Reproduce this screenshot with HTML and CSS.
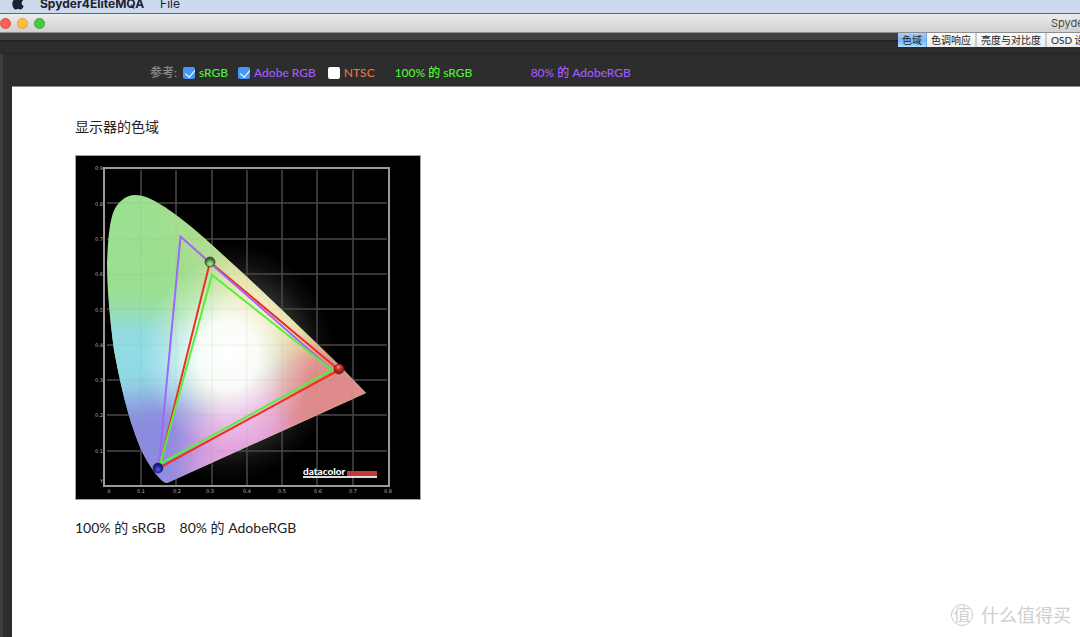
FILE: index.html
```html
<!DOCTYPE html>
<html lang="zh-CN">
<head>
<meta charset="utf-8">
<title>Spyder4EliteMQA</title>
<link rel="stylesheet" href="styles.css">
</head>
<body>
<header class="menubar">
  <svg class="apple" viewBox="0 0 12 14" aria-hidden="true"><path d="M8.4 0.2C8.5 1.6 7.4 2.9 6 3 5.9 1.6 7.1 0.4 8.4 0.2ZM6.1 3.9C6.8 3.9 7.4 3.2 8.6 3.2 9.7 3.2 10.7 3.8 11.2 4.6 8.9 6 9.3 9.2 11.7 10 11 12 9.8 13.6 8.6 13.6 7.6 13.6 7.2 13 6.1 13 5 13 4.6 13.6 3.7 13.6 2.1 13.6 0.3 10.7 0.3 7.7 0.3 4.8 2.1 3.2 3.8 3.2 4.9 3.2 5.5 3.9 6.1 3.9Z"/></svg>
  <span class="app-name">Spyder4EliteMQA</span>
  <span class="menu-item">File</span>
</header>
<div class="titlebar">
  <div class="lights">
    <button class="light close" aria-label="关闭"></button>
    <button class="light minimise" aria-label="最小化"></button>
    <button class="light expand" aria-label="缩放"></button>
  </div>
  <span class="window-title">Spyder</span>
</div>
<main class="window">
  <div class="top-strip">
    <nav class="tabs">
      <button class="tab active">色域</button>
      <button class="tab">色调响应</button>
      <button class="tab">亮度与对比度</button>
      <button class="tab">OSD 设置</button>
    </nav>
  </div>
  <section class="body">
    <div class="reference">
      <span class="ref-label">参考:</span>
      <label class="option green"><input type="checkbox" checked>sRGB</label>
      <label class="option purple"><input type="checkbox" checked>Adobe RGB</label>
      <label class="option orange"><input type="checkbox">NTSC</label>
      <span class="result green">100% 的 sRGB</span>
      <span class="result purple">80% 的 AdobeRGB</span>
    </div>
    <article class="sheet">
      <h1 class="heading">显示器的色域</h1>
      <svg class="chart" viewBox="0 0 346 345" role="img" aria-label="色域图">
        <defs>
          <clipPath id="locus"><path d="M92 328C86 328 73 310 65 292C52 260 45 227 39 195C35 165 32 135 32 108C33 80 35 67 38 58C42 47 51 40 60 40C69 40 76 44 83 48C102 59 119 74 137 90L172 122L207 155L262 208L291 238Z"/></clipPath>
          <filter id="soft" x="-60%" y="-60%" width="220%" height="220%"><feGaussianBlur stdDeviation="15"/></filter>
          <radialGradient id="glow"><stop offset="0" stop-color="#fff" stop-opacity=".8"/><stop offset=".65" stop-color="#fff" stop-opacity=".34"/><stop offset=".85" stop-color="#fff" stop-opacity=".1"/><stop offset="1" stop-color="#fff" stop-opacity="0"/></radialGradient>
          <radialGradient id="white"><stop offset="0" stop-color="#fff"/><stop offset=".35" stop-color="#fff" stop-opacity=".92"/><stop offset=".7" stop-color="#fff" stop-opacity=".3"/><stop offset="1" stop-color="#fff" stop-opacity="0"/></radialGradient>
          <radialGradient id="ballGreen" cx=".5" cy=".7"><stop offset="0" stop-color="#b4f09a"/><stop offset=".6" stop-color="#68b656"/><stop offset="1" stop-color="#3d6a34"/></radialGradient>
          <radialGradient id="ballRed" cx=".45" cy=".3"><stop offset="0" stop-color="#ff9084"/><stop offset=".45" stop-color="#e0352c"/><stop offset="1" stop-color="#a01e1a"/></radialGradient>
          <radialGradient id="ballBlue" cx=".5" cy=".65"><stop offset="0" stop-color="#6f62f0"/><stop offset=".5" stop-color="#312ec4"/><stop offset="1" stop-color="#1a1866"/></radialGradient>
          <g id="grid"><path d="M66 15V330M101 15V330M137 15V330M172 15V330M207 15V330M242 15V330M278 15V330M32 48H312M32 84H312M32 119H312M32 154H312M32 190H312M32 225H312M32 260H312M32 296H312"/></g>
        </defs>
        <rect class="plate" x=".5" y=".5" width="345" height="344"/>
        <ellipse cx="153" cy="207" rx="108" ry="120" fill="url(#glow)" opacity=".5"/>
        <use href="#grid" class="grid-lines"/>
        <g clip-path="url(#locus)">
          <rect x="20" y="30" width="280" height="305" fill="#9bdf90"/>
          <g filter="url(#soft)">
            <path d="M75 10L215 130L150 180L105 95Z" fill="#aedd90"/>
            <path d="M150 80L215 125L270 195L225 215L150 170Z" fill="#e9dfa0"/>
            <path d="M-20 162L70 158L125 175L115 245L-20 260Z" fill="#91dbe5"/>
            <path d="M0 250L80 238L140 240L125 370H0Z" fill="#8d8be0"/>
            <path d="M120 270L165 215L235 235L235 350H115Z" fill="#e3a2dc"/>
            <path d="M205 195L265 185L340 250L225 310L195 240Z" fill="#df8b8b"/>
          </g>
          <ellipse cx="153" cy="200" rx="86" ry="96" fill="url(#white)"/>
          <use href="#grid" class="grid-faint"/>
        </g>
        <rect class="frame" x="29" y="13" width="285" height="318"/>
        <path class="line red-line" d="M135 107L84 313L264 215Z"/>
        <path class="line purple-line" d="M84 309L105.500 81.500L142 114L256 214"/>
        <path class="line green-line" d="M137 120L257 215L85 309Z"/>
        <g class="balls">
          <circle cx="135" cy="107" r="5" fill="url(#ballGreen)"/>
          <circle cx="264" cy="214" r="5" fill="url(#ballRed)"/>
          <circle cx="83" cy="313" r="5" fill="url(#ballBlue)"/>
        </g>
        <g class="ticks" text-anchor="end">
          <text x="28" y="15">0.9</text><text x="28" y="51">0.8</text><text x="28" y="86">0.7</text><text x="28" y="121">0.6</text><text x="28" y="157">0.5</text><text x="28" y="192">0.4</text><text x="28" y="227">0.3</text><text x="28" y="262">0.2</text><text x="28" y="298">0.1</text><text x="28" y="328">Y</text>
        </g>
        <g class="ticks" text-anchor="middle">
          <text x="34" y="338">X</text><text x="66" y="338">0.1</text><text x="102" y="338">0.2</text><text x="135" y="338">0.3</text><text x="172" y="338">0.4</text><text x="207" y="338">0.5</text><text x="243" y="338">0.6</text><text x="278" y="338">0.7</text><text x="313" y="338">0.8</text>
        </g>
        <text class="brand" x="228" y="320">datacolor</text>
        <rect x="272" y="316" width="30" height="5" fill="#c73838"/>
        <rect x="228" y="321" width="74" height="2" fill="#ddd"/>
      </svg>
      <p class="summary"><span>100% 的 sRGB</span><span>80% 的 AdobeRGB</span></p>
      <div class="watermark"><span class="badge">值</span><span>什么值得买</span></div>
    </article>
  </section>
</main>
</body>
</html>
```
FILE: styles.css
```css
* { box-sizing: border-box; }
body {
  margin: 0;
  min-height: 100vh;
  display: flex;
  flex-direction: column;
  overflow: hidden;
  background: #2d2d2d;
  font-family: Lato, "Noto Sans CJK SC", sans-serif;
}
button { border: 0; padding: 0; margin: 0; font: inherit; }
.menubar {
  height: 14px;
  flex: none;
  display: flex;
  align-items: flex-end;
  padding: 0 12px 1px;
  background: #cdd9ed;
  border-bottom: 1px solid #56668a;
  color: #1d2330;
  font: 12px/16px Inter, "Noto Sans CJK SC", sans-serif;
}
.apple { width: 12px; height: 14px; margin-bottom: 2px; fill: #1d2330; }
.app-name { margin-left: 16px; font-weight: 700; }
.menu-item { margin-left: 16px; }
.titlebar {
  height: 19px;
  flex: none;
  display: flex;
  align-items: center;
  justify-content: space-between;
  background: linear-gradient(#ececec, #d0d0d0);
  border-bottom: 1px solid #8e8e8e;
}
.lights { display: flex; gap: 6px; }
.light { width: 11px; height: 11px; border-radius: 50%; border: 1px solid #dc4c45; background: #fb6158; }
.minimise { border-color: #dfa138; background: #fdbd40; }
.expand { border-color: #38ac38; background: #49c746; }
.window-title {
  width: 29px;
  white-space: nowrap;
  overflow: hidden;
  font: 11px/16px Inter, sans-serif;
  color: #4a4a4a;
}
.window { flex: 1; display: flex; flex-direction: column; }
.top-strip {
  height: 21px;
  display: flex;
  justify-content: flex-end;
  align-items: flex-start;
  background: linear-gradient(#424242 0 7px, #242424 7px 9px, #2d2d2d 9px);
  border-bottom: 1px solid #252525;
}
.tabs { display: flex; width: 182px; overflow: hidden; }
.tab {
  flex: none;
  height: 14px;
  padding: 0 4px;
  border-right: 2px solid #ccc;
  background: linear-gradient(#fbfbfb, #ececec);
  color: #222;
  font-size: 10px;
  line-height: 12px;
  white-space: nowrap;
}
.tab.active { background: linear-gradient(#a9d1fb, #79b7f7 50%, #a9dcff); border-right: 1px solid #69a6e4; }
.body { flex: 1; display: flex; flex-direction: column; padding-left: 9px; border-left: 3px solid #3e3e3e; }
.reference {
  height: 33px;
  display: flex;
  align-items: center;
  padding: 5px 0 0 138px;
  border-bottom: 1px solid #8b8b8b;
  font-size: 12px;
  line-height: 18px;
  font-weight: 500;
  white-space: nowrap;
}
.ref-label { width: 33px; color: #8b8b8b; }
.option { display: flex; align-items: center; gap: 4px; margin-right: 10px; }
.option.purple { margin-right: 12px; }
.option input {
  appearance: none;
  width: 12px;
  height: 12px;
  margin: 0;
  border-radius: 2px;
  background: #fff;
}
.option input:checked { background: #4698f5; }
.option input:checked::before {
  content: "";
  display: block;
  width: 5px;
  height: 8px;
  margin: 1px 0 0 4px;
  border: solid #fff;
  border-width: 0 1px 1px 0;
  transform: rotate(40deg);
}
.green { color: #4df436; }
.purple { color: #a15bff; }
.orange { color: #ea7440; }
.result { min-width: 136px; }
.orange + .result { margin-left: 10px; }
.sheet { position: relative; flex: 1; padding: 30px 63px; background: #fff; color: #222; }
.heading { margin: 0 0 18px; font-size: 14px; line-height: 20px; font-weight: 400; }
.chart { display: block; width: 346px; height: 345px; }
.plate { fill: #000; stroke: #a0a5a0; }
.grid-lines { fill: none; stroke: #484848; stroke-width: 1.500; }
.grid-faint { fill: none; stroke: #789070; stroke-opacity: .12; }
.frame { fill: none; stroke: #9a9a9a; stroke-width: 2; }
.line { fill: none; stroke-width: 2; }
.purple-line { stroke: #a264fb; }
.red-line { stroke: #f02d22; }
.green-line { stroke: #55f03c; }
.balls { stroke: #252525; stroke-opacity: .6; }
.ticks { fill: #b4b4b4; font: 5px "DejaVu Sans", sans-serif; }
.brand { fill: #fff; font: 900 10px Lato, sans-serif; }
.summary { margin: 18px 0 0; display: flex; gap: 14px; font-size: 14px; line-height: 20px; }
.watermark {
  position: absolute;
  right: 9px;
  bottom: 9px;
  display: flex;
  align-items: center;
  gap: 8px;
  color: #cfcfcf;
  font-size: 18px;
  line-height: 26px;
}
.badge {
  width: 22px;
  height: 22px;
  border: 1px solid #ccc;
  border-radius: 50%;
  font-size: 17px;
  line-height: 19px;
  text-align: center;
}
```
